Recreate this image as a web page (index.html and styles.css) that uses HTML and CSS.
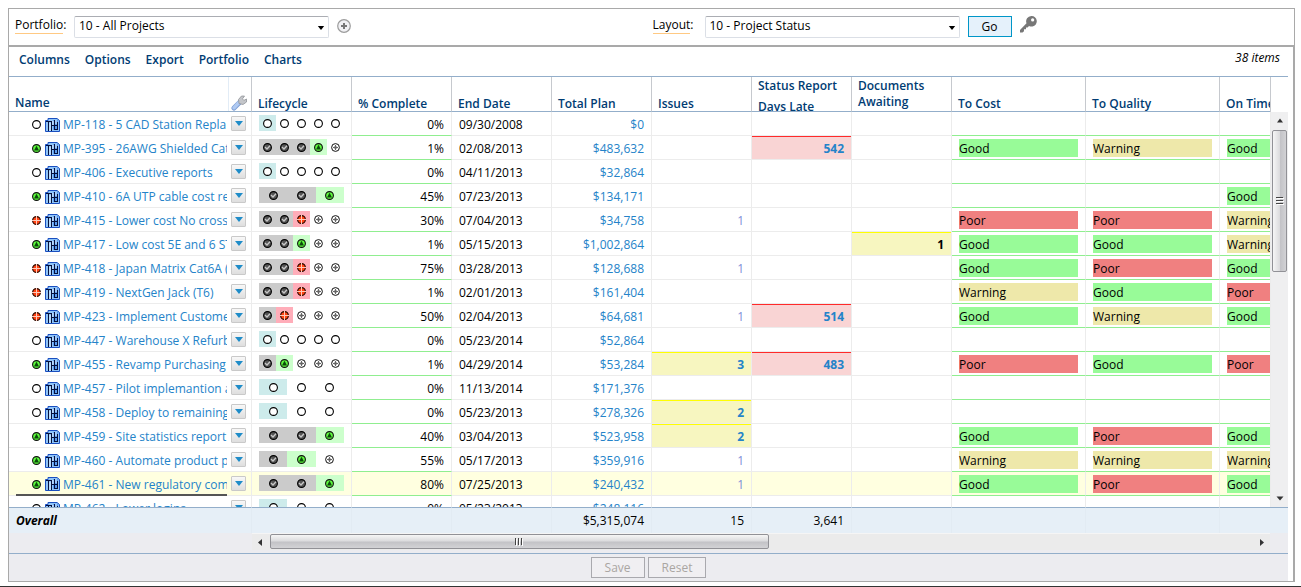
FILE: index.html
```html
<!DOCTYPE html>
<html lang="en">
<head>
<meta charset="utf-8">
<title>Portfolio - All Projects</title>
<link rel="stylesheet" href="styles.css">
</head>
<body>
<svg class="sprite" aria-hidden="true">
  <symbol id="open" viewBox="0 0 9 9"><circle cx="4.500" cy="4.500" r="3.900" fill="#fff" stroke="#000" stroke-width="1.100"/></symbol>
  <symbol id="good" viewBox="0 0 9 9"><circle cx="4.500" cy="4.500" r="3.900" fill="#5cf93c" stroke="#111" stroke-width="1.100"/><path d="M4.500 1.800 7 6.500H2Z" fill="#0a4a0a"/></symbol>
  <symbol id="bad" viewBox="0 0 9 9"><circle cx="4.500" cy="4.500" r="3.900" fill="#ff4010" stroke="#200800" stroke-width="1.100"/><path d="M4.500 0v9M0 4.500h9" stroke="#ffc9b8"/></symbol>
  <symbol id="done" viewBox="0 0 9 9"><circle cx="4.500" cy="4.500" r="3.900" fill="#555" stroke="#000" stroke-width="1.100"/><path d="M2 4 4 6 7 2.800" fill="none" stroke="#c8c8c8" stroke-width="1.300"/></symbol>
  <symbol id="next" viewBox="0 0 9 9"><circle cx="4.500" cy="4.500" r="3.900" fill="#fff" stroke="#111" stroke-width="1"/><path d="M3 3h3v3H3Z" fill="#b5b5b5"/><path d="M4.500 2v5M2 4.500h5" stroke="#666"/></symbol>
  <symbol id="project" viewBox="0 0 15 14"><path d="M.5 2.500H3V.5h9l2.500 2v11H.5Z" fill="#8fc4f8" stroke="#1a4fc0"/><path d="M8 2h5v10H8Z" fill="#5a9cf0"/><path d="M1 3.500h6M3.500 3v10M6.500 3v10M9.500 2v10M7 7.500h6M12.500 4v8M9 11.500h4" stroke="#04103c" fill="none"/><path d="M5 5v8M8 3v4M11 2v4" stroke="#e2f1ff" fill="none"/></symbol>
  <symbol id="down" viewBox="0 0 8 5"><path d="M0 0h8L4 5Z" fill="currentColor"/></symbol>
  <symbol id="wrench" viewBox="0 0 16 16"><path d="M3 13 8.500 7.500" stroke="#7e9fd6" stroke-width="5" stroke-linecap="round"/><path d="M3 12.800 8 7.500" stroke="#b0caf2" stroke-width="3.400" stroke-linecap="round"/><path d="M8 8.500 7.500 4.500 10.500 1l3 .1-2 2.700 1.300 1.600L15.500 4v3L12 9.500Z" fill="#c4c6ca" stroke="#909398" stroke-width=".8"/></symbol>
</svg>

<main class="page">
  <form class="picker">
    <div class="picker-side picker-left">
      <label for="portfolio"><span class="hint">Portfolio</span>:</label>
      <span class="combo">
        <select id="portfolio"><option>10 - All Projects</option></select>
        <svg class="combo-arrow"><use href="#down"/></svg>
      </span>
      <button type="button" class="icon-button" aria-label="Add portfolio">
        <svg width="14" height="14" viewBox="0 0 14 14"><circle cx="7" cy="7" r="6.300" fill="#f1f1f4" stroke="#9c9c9c" stroke-width="1.200"/><path d="M7 4v6M4 7h6" stroke="#777" stroke-width="2"/></svg>
      </button>
    </div>
    <div class="picker-side picker-right">
      <label for="layout"><span class="hint">Layout</span>:</label>
      <span class="combo">
        <select id="layout"><option>10 - Project Status</option></select>
        <svg class="combo-arrow"><use href="#down"/></svg>
      </span>
      <button type="button" class="go">Go</button>
      <button type="button" class="icon-button key" aria-label="Permissions">
        <svg width="17" height="17" viewBox="0 0 17 17"><path fill="#777" fill-rule="evenodd" d="M11.300 0a5.300 5.300 0 0 1 1.200 10.500 5.300 5.300 0 0 1-3.500-.6L7.500 11.500H6v1.800H4v2L2.500 16.500H0V14l6.500-6.800A5.300 5.300 0 0 1 11.300 0ZM12.600 2.300a1.600 1.600 0 1 0 .1 3.200 1.600 1.600 0 0 0-.1-3.200Z"/></svg>
      </button>
    </div>
  </form>

  <section class="board">
    <nav class="menu">
      <a href="#">Columns</a><a href="#">Options</a><a href="#">Export</a><a href="#">Portfolio</a><a href="#">Charts</a>
      <span class="count">38 items</span>
    </nav>
    <div class="grid">
      <div class="viewport">
        <table>
          <colgroup><col class="c-name"><col class="c-std" span="7"><col class="c-rate" span="3"></colgroup>
          <thead>
            <tr>
              <th><div class="head head-name"><span>Name</span><span class="tool"><svg width="16" height="16"><use href="#wrench"/></svg></span></div></th>
              <th><div class="head">Lifecycle</div></th>
              <th><div class="head">% Complete</div></th>
              <th><div class="head">End Date</div></th>
              <th><div class="head">Total Plan</div></th>
              <th><div class="head">Issues</div></th>
              <th><div class="head head-split"><span>Status Report</span><span>Days Late</span></div></th>
              <th><div class="head head-top">Documents Awaiting</div></th>
              <th><div class="head">To Cost</div></th>
              <th><div class="head">To Quality</div></th>
              <th><div class="head">On Time</div></th>
            </tr>
          </thead>
          <tbody id="rows"></tbody>
          <tfoot>
            <tr><td class="overall">Overall</td><td></td><td></td><td></td><td class="num">$5,315,074</td><td class="num">15</td><td class="num">3,641</td><td></td><td></td><td></td><td></td></tr>
          </tfoot>
        </table>
      </div>
      <div class="side">
        <div class="side-head"></div>
        <div class="vbar">
          <svg class="arrow" viewBox="0 0 16 16"><path d="M5 10h6L8 6Z" fill="#333"/></svg>
          <div class="vthumb"><svg width="8" height="9" viewBox="0 0 8 9"><path d="M0 .5h7M0 3.500h7M0 6.500h7" stroke="#444"/><path d="M1 1.500h7M1 4.500h7M1 7.500h7" stroke="#fff"/></svg></div>
          <svg class="arrow" viewBox="0 0 16 16"><path d="M4.500 6h7L8 10Z" fill="#333"/></svg>
        </div>
        <div class="side-foot"></div>
      </div>
    </div>
    <div class="hrow">
      <div class="hbar">
        <svg class="arrow" viewBox="0 0 16 16"><path d="M10 4.500v7L6 8Z" fill="#333"/></svg>
        <div class="htrack"><div class="hthumb"><svg width="9" height="8" viewBox="0 0 9 8"><path d="M.5 0v7M3.500 0v7M6.500 0v7" stroke="#444"/><path d="M1.500 1v7M4.500 1v7M7.500 1v7" stroke="#fff"/></svg></div></div>
        <svg class="arrow" viewBox="0 0 16 16"><path d="M6 4.500v7L10 8Z" fill="#333"/></svg>
      </div>
    </div>
    <div class="actions">
      <button type="button" disabled>Save</button>
      <button type="button" disabled>Reset</button>
    </div>
  </section>
</main>
<div class="edge"></div>
<script src="app.js"></script>
</body>
</html>
```

FILE: styles.css
```css
* { box-sizing: border-box; }

body {
  margin: 0;
  background: #fff;
  color: #000;
  font: 12px/16px "Open Sans", "Noto Sans", sans-serif;
}

button, select { font: inherit; color: inherit; margin: 0; }
a { color: #2483c9; text-decoration: none; }
svg { display: block; flex: none; }
.sprite { position: absolute; width: 0; height: 0; }

.page { margin: 8px 6px 0 8px; }

/* portfolio and layout pickers */
.picker {
  display: grid;
  grid-template-columns: 1fr 1fr;
  border: 1px solid #a9a9a9;
  border-bottom-width: 2px;
  padding: 7px 0;
}
.picker-side { display: flex; align-items: flex-start; }
.picker-left { padding-left: 6px; }
.picker label { width: 59px; line-height: 18px; }
.picker-right { padding-left: 1px; }
.picker-right label { width: 52px; }
.hint { display: inline-block; border-bottom: 1px solid #ffc983; line-height: 17px; }
.combo { position: relative; }
.combo select {
  display: block;
  appearance: none;
  width: 255px;
  height: 22px;
  padding: 0 24px 2px 4px;
  background: #fff;
  border: 1px solid #dbdfe6;
  border-top-color: #abadb3;
  border-radius: 2px;
}
.combo-arrow { position: absolute; right: 4px; top: 10px; width: 8px; height: 4px; }
.icon-button { border: 0; background: none; padding: 3px 0 0; margin-left: 8px; }
.icon-button.key { padding: 0; }
.go {
  width: 44px;
  height: 21px;
  margin-left: 8px;
  padding: 0;
  line-height: 17px;
  background: #e5f1fb;
  border: 1px solid #0096c8;
}

/* board */
.board {
  border: solid #a9a9a9;
  border-width: 0 2px 1px 1px;
  padding-right: 5px;
}
.menu {
  display: flex;
  gap: 15px;
  align-items: center;
  height: 30px;
  padding: 0 8px 3px 10px;
  border-bottom: 1px solid #93aeca;
}
.menu a { color: #003c73; font-weight: 600; }
.count { margin-left: auto; font-style: italic; align-self: flex-start; padding-top: 3px; }

.grid { display: flex; height: 456px; }
.viewport { flex: 1; min-width: 0; overflow: hidden; }
table { table-layout: fixed; width: 1345px; border-collapse: separate; border-spacing: 0; }
.c-name { width: 243px; }
.c-std { width: 100px; }
.c-rate { width: 134px; }
th, td { padding: 0; text-align: left; border-right: 1px solid #ececec; }
th {
  position: sticky;
  top: 0;
  background: #fff;
  color: #003c73;
  font-weight: 600;
  border-right-color: #c6c9ce;
  border-bottom: 1px solid #93aeca;
}
.head { display: flex; align-items: flex-end; height: 34px; padding: 0 6px; line-height: 15px; overflow: hidden; }
.head-name { justify-content: space-between; padding: 0 0 0 6px; }
.head-name > span:first-child { padding-bottom: 1px; }
.tool { display: flex; align-items: flex-end; width: 23px; height: 34px; padding-left: 2px; border-left: 1px solid #e2ecf6; }
.head-top { align-items: flex-start; line-height: 16px; padding-top: 1px; }
.head-split { flex-direction: column; align-items: flex-start; justify-content: flex-start; gap: 5px; line-height: 16px; padding-top: 1px; }
.head-split span { flex: none; }

tbody td { height: 24px; line-height: 21px; padding: 2px 7px 0; border-bottom: 1px solid #ececec; }
tbody .rated { border-bottom-color: #90ee90; }
tbody .name { padding: 0; }
tbody .current td { background: #ffffe0; }
.num { text-align: right; }
.money, .late, .issue { color: #2483c9; }
.one { color: #7f8fd8; }
td.alert-red { background: #f9d4d4; box-shadow: inset 0 1px #ff2a2a; font-weight: 700; }
td.alert-yellow { background: #f7f6c0; box-shadow: inset 0 1px #ff0; font-weight: 700; }

.project { display: flex; height: 23px; }
.project-link {
  display: flex;
  align-items: center;
  gap: 3px;
  flex: 1;
  min-width: 0;
  margin-left: 7px;
  padding: 2px 0 0 16px;
  overflow: hidden;
  white-space: nowrap;
}
.project-link .mark { width: 9px; height: 9px; margin-right: 1px; }
.project-link .kind { width: 15px; height: 14px; }
.current .project-link { border-bottom: 2px solid #555; height: 24px; }
.drop {
  display: flex;
  align-items: center;
  justify-content: center;
  width: 15px;
  height: 15px;
  margin: 4px 5px 0 4px;
  padding: 0;
  background: linear-gradient(#f8f8f8, #dedede);
  border: 1px solid #c9c9c9;
  border-radius: 1px;
  color: #1f8cc8;
}
.drop svg { width: 8px; height: 5px; }

.stages { display: flex; width: 85px; height: 16px; margin: 1px 0 4px; }
.stage { display: flex; flex: 1; align-items: center; justify-content: center; padding-top: 1px; }
.stage svg { width: 9px; height: 9px; }
.stage.done { background: #cbcbcb; }
.stage.good { background: #ccffcc; }
.stage.bad { background: #ffadb9; }
.stage.start { background: #cdebeb; }

.rate { height: 18px; line-height: 19px; margin: 1px 0 2px; }
.rate.good { background: #98fb98; }
.rate.warning { background: #eee8aa; }
.rate.poor { background: #f08080; }

tfoot td {
  position: sticky;
  bottom: 0;
  height: 26px;
  padding: 0 7px;
  background: #e6eff7;
  border-top: 1px solid #93aeca;
  border-right-color: #e2ebf3;
}
.overall { font-weight: 700; font-style: italic; }

/* scroll bars */
.side { display: flex; flex-direction: column; width: 18px; }
.side-head { height: 35px; border-left: 1px solid #c6c9ce; }
.side-foot { height: 26px; background: #e6eff7; border-top: 1px solid #93aeca; }
.vbar {
  display: flex;
  flex-direction: column;
  flex: 1;
  border-left: 1px solid #ececec;
  padding-left: 1px;
  background: #efeff0;
}
.arrow { width: 16px; height: 17px; }
.vthumb {
  display: flex;
  align-items: center;
  justify-content: center;
  width: 15px;
  height: 142px;
  margin: 1px 0 auto;
  background: linear-gradient(90deg, #f6f6f6, #dcdcde 50%, #c3c3c7 55%, #d2d2d5);
  border: 1px solid #919196;
  border-radius: 2px;
}
.hrow { height: 20px; padding: 0 18px 0 243px; background: #ececf0; }
.hbar { display: flex; height: 17px; background: #ebebeb; border-top: 1px solid #f5f5f5; }
.htrack { flex: 1; padding-left: 2px; }
.hthumb {
  display: flex;
  align-items: center;
  justify-content: center;
  width: 499px;
  height: 15px;
  background: linear-gradient(#f6f6f6, #dcdcde 45%, #c3c3c7 55%, #d2d2d5);
  border: 1px solid #919196;
  border-radius: 2px;
}

.actions {
  display: flex;
  justify-content: center;
  gap: 3px;
  padding: 3px 0;
  background: #ececf0;
  border-top: 1px solid #93aeca;
}
.actions button {
  height: 21px;
  padding: 0 13px;
  line-height: 19px;
  background: #f0eff2;
  border: 1px solid #a9a9ae;
  color: #aaa6a2;
}
.edge { height: 1px; margin-top: 4px; background: #333; }
```

FILE: app.js
```js
// id, title, state, stages, % complete, end date, plan, issues, days late, documents, cost, quality, time
// stage codes: s = start, o = open, d = done, g = good, b = bad, n = next
const projects = [
  ["MP-118", "5 CAD Station Repla", "open", "soooo", "0%", "09/30/2008", "$0", "", "", "", "", "", ""],
  ["MP-395", "26AWG Shielded Cat", "good", "dddgn", "1%", "02/08/2013", "$483,632", "", "542", "", "Good", "Warning", "Good"],
  ["MP-406", "Executive reports", "open", "soooo", "0%", "04/11/2013", "$32,864", "", "", "", "", "", ""],
  ["MP-410", "6A UTP cable cost re", "good", "ddg", "45%", "07/23/2013", "$134,171", "", "", "", "", "", "Good"],
  ["MP-415", "Lower cost No cross", "bad", "ddbnn", "30%", "07/04/2013", "$34,758", "1", "", "", "Poor", "Poor", "Warning"],
  ["MP-417", "Low cost 5E and 6 ST", "good", "ddgnn", "1%", "05/15/2013", "$1,002,864", "", "", "1", "Good", "Good", "Warning"],
  ["MP-418", "Japan Matrix Cat6A (", "bad", "ddbnn", "75%", "03/28/2013", "$128,688", "1", "", "", "Good", "Poor", "Good"],
  ["MP-419", "NextGen Jack (T6)", "bad", "ddbnn", "1%", "02/01/2013", "$161,404", "", "", "", "Warning", "Good", "Poor"],
  ["MP-423", "Implement Custome", "bad", "dbnnn", "50%", "02/04/2013", "$64,681", "1", "514", "", "Good", "Warning", "Good"],
  ["MP-447", "Warehouse X Refurb", "open", "soooo", "0%", "05/23/2014", "$52,864", "", "", "", "", "", ""],
  ["MP-455", "Revamp Purchasing", "good", "dgnnn", "1%", "04/29/2014", "$53,284", "3", "483", "", "Poor", "Good", "Poor"],
  ["MP-457", "Pilot implemantion a", "open", "soo", "0%", "11/13/2014", "$171,376", "", "", "", "", "", ""],
  ["MP-458", "Deploy to remaining", "open", "soo", "0%", "05/23/2013", "$278,326", "2", "", "", "", "", ""],
  ["MP-459", "Site statistics report", "good", "ddg", "40%", "03/04/2013", "$523,958", "2", "", "", "Good", "Poor", "Good"],
  ["MP-460", "Automate product p", "good", "dgn", "55%", "05/17/2013", "$359,916", "1", "", "", "Warning", "Warning", "Warning"],
  ["MP-461", "New regulatory com", "good", "ddg", "80%", "07/25/2013", "$240,432", "1", "", "", "Good", "Poor", "Good"],
  ["MP-462", "Lower logins", "open", "soo", "0%", "05/23/2013", "$248,116", "", "", "", "", "", ""]
];

const stageNames = { s: "start", o: "open", d: "done", g: "good", b: "bad", n: "next" };

const stage = code => {
  const name = stageNames[code];
  return `<span class="stage ${name}"><svg><use href="#${name === "start" ? "open" : name}"/></svg></span>`;
};

const rate = value =>
  `<td class="rated">${value && `<div class="rate ${value.toLowerCase()}">${value}</div>`}</td>`;

const issueClass = value => (value === "1" ? "one" : value ? "alert-yellow" : "");

document.getElementById("rows").innerHTML = projects.map(p => {
  const [id, title, state, stages, done, end, plan, issues, late, docs, cost, quality, time] = p;
  return `<tr class="${id === "MP-461" ? "current" : ""}">
    <td class="name"><div class="project">
      <a class="project-link" href="#"><svg class="mark"><use href="#${state}"/></svg><svg class="kind"><use href="#project"/></svg><span>${id} - ${title}</span></a>
      <button type="button" class="drop" aria-label="${id} menu"><svg><use href="#down"/></svg></button>
    </div></td>
    <td><div class="stages">${[...stages].map(stage).join("")}</div></td>
    <td class="num rated">${done}</td>
    <td>${end}</td>
    <td class="num money">${plan}</td>
    <td class="num issue ${issueClass(issues)}">${issues}</td>
    <td class="num late ${late && "alert-red"}">${late}</td>
    <td class="num ${docs && "alert-yellow"}">${docs}</td>
    ${rate(cost)}${rate(quality)}${rate(time)}
  </tr>`;
}).join("");
```
